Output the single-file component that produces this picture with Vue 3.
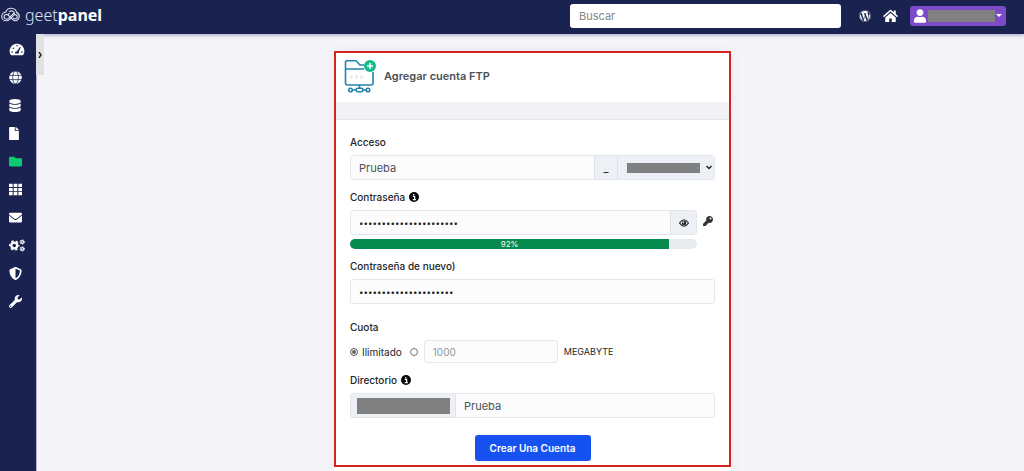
<script setup>
import { ref } from 'vue'

const icons = {
  dashboard: 'M288 32A288 288 0 0 0 40 466q8 14 24 14h448q16 0 24-14A288 288 0 0 0 288 32zM288 80a30 30 0 1 1 0 60 30 30 0 0 1 0-60zM96 384a32 32 0 1 1 0-64 32 32 0 0 1 0 64zm52-144a32 32 0 1 1 0-64 32 32 0 0 1 0 64zm247-73q10-15 25-8 15 7 8 24l-73 166q19 31-1 67H222q-27-51 18-82 17-11 45-14zm85 217a32 32 0 1 1 0-64 32 32 0 0 1 0 64z',
  database: 'M448 73.143v45.714C448 159.143 347.667 192 224 192S0 159.143 0 118.857V73.143C0 32.857 100.333 0 224 0s224 32.857 224 73.143zM448 176v102.857C448 319.143 347.667 352 224 352S0 319.143 0 278.857V176c48.125 33.143 136.208 48.572 224 48.572S399.874 209.143 448 176zm0 160v102.857C448 479.143 347.667 512 224 512S0 479.143 0 438.857V336c48.125 33.143 136.208 48.572 224 48.572S399.874 369.143 448 336z',
  file: 'M224 136V0H24C10.7 0 0 10.7 0 24v464c0 13.3 10.7 24 24 24h336c13.3 0 24-10.7 24-24V160H248c-13.2 0-24-10.8-24-24zm160-14.1v6.1H256V0h6.1c6.4 0 12.5 2.5 17 7l97.9 98c4.5 4.5 7 10.6 7 16.9z',
  folder: 'M464 128H272l-64-64H48C21.49 64 0 85.49 0 112v288c0 26.51 21.49 48 48 48h416c26.51 0 48-21.49 48-48V176c0-26.51-21.49-48-48-48z',
  grid: 'M0 32h144v130H0zM184 32h144v130H184zM368 32h144v130H368zM0 194h144v130H0zM184 194h144v130H184zM368 194h144v130H368zM0 356h144v124H0zM184 356h144v124H184zM368 356h144v124H368z',
  mail: 'M48 64h416q48 0 48 48v24L295 303q-39 28-78 0L0 136v-24q0-48 48-48zM0 178l198 152q58 40 116 0l198-152v222q0 48-48 48H48q-48 0-48-48z',
  shield: 'M466.5 83.7l-192-80a48.15 48.15 0 0 0-36.9 0l-192 80C27.7 91.1 16 108.6 16 128c0 198.5 114.5 335.7 221.5 380.3 11.8 4.9 25.1 4.9 36.9 0C360.1 472.6 496 349.3 496 128c0-19.4-11.7-36.9-29.5-44.3zM256.1 446.3l-.1-381 175.9 73.3c-3.3 151.4-82.1 261.1-175.8 307.7z',
  wrench: 'M507.73 109.1c-2.24-9.03-13.54-12.09-20.12-5.51l-74.36 74.36-67.88-11.31-11.31-67.88 74.36-74.36c6.62-6.62 3.43-17.9-5.66-20.16-47.38-11.74-99.55.91-136.58 37.93-39.64 39.64-50.55 97.1-34.05 147.2L18.74 402.76c-24.99 24.99-24.99 65.51 0 90.5 24.99 24.99 65.51 24.99 90.5 0l213.21-213.21c50.12 16.71 107.47 5.68 147.37-34.22 37.07-37.07 49.7-89.32 37.91-136.73zM64 472c-13.25 0-24-10.75-24-24 0-13.26 10.75-24 24-24s24 10.74 24 24c0 13.25-10.75 24-24 24z'
}

const nav = [
  { id: 'dashboard', label: 'Panel', box: '0 0 576 512', w: 16 },
  { id: 'globe', label: 'Dominios', box: '0 0 512 512', w: 13 },
  { id: 'database', label: 'Bases de datos', box: '0 0 448 512', w: 12 },
  { id: 'file', label: 'Archivos', box: '0 0 384 512', w: 10 },
  { id: 'folder', label: 'FTP', box: '0 0 512 512', w: 13, active: true },
  { id: 'grid', label: 'Aplicaciones', box: '0 0 512 512', w: 13 },
  { id: 'mail', label: 'Correo', box: '0 0 512 512', w: 13 },
  { id: 'gears', label: 'Ajustes', box: '0 0 640 512', w: 16 },
  { id: 'shield', label: 'Seguridad', box: '0 0 512 512', w: 13 },
  { id: 'wrench', label: 'Herramientas', box: '0 0 512 512', w: 13 }
]

const login = ref('Prueba')
const password = ref('x'.repeat(22))
const confirmation = ref('x'.repeat(21))
const directory = ref('Prueba')
const quota = ref('unlimited')
const strength = 92
</script>

<template>
  <div class="app">
    <header class="topbar">
      <a class="brand" href="#">
        <svg class="brand-mark" viewBox="0 0 42 32" fill="none" stroke="#d9dced" stroke-width="2.4">
          <path d="M11 28a9 9 0 0 1-1-18A12 12 0 0 1 33 11a9 9 0 0 1-2 17q-4 0-7-3l-9-9q-4-3-7 0-3 4 0 7 4 3 8 0l11-11" />
          <path d="M17 9q6-4 10 1 2 3 1 6M11 28q4 0 7-3l9-9q4-2 7 2 1 5-3 6-3 1-6-2M14 16l4-4" />
        </svg>
        <span class="brand-name">geet<b>panel</b></span>
      </a>
      <div class="tools">
        <input class="search" type="search" placeholder="Buscar" aria-label="Buscar" />
        <a class="tool" href="#" aria-label="WordPress">
          <svg width="12" height="12" viewBox="0 0 512 512"><path d="M61.7 169.4l101.5 278C92.2 413 43.3 340.2 43.3 256c0-30.9 6.6-60.1 18.4-86.6zm337.9 75.9c0-26.3-9.4-44.5-17.5-58.7-10.8-17.5-20.9-32.4-20.9-49.9 0-19.6 14.8-37.8 35.7-37.8.9 0 1.8.1 2.8.2-37.9-34.7-88.3-55.9-143.7-55.9-74.3 0-139.7 38.1-177.8 95.9 5 .2 9.7.3 13.7.3 22.2 0 56.7-2.7 56.7-2.7 11.5-.7 12.8 16.2 1.4 17.5 0 0-11.5 1.3-24.3 2l77.5 230.4L249.8 247l-33.1-90.8c-11.5-.7-22.3-2-22.3-2-11.5-.7-10.1-18.2 1.3-17.5 0 0 35.1 2.7 56 2.7 22.2 0 56.7-2.7 56.7-2.7 11.5-.7 12.8 16.2 1.4 17.5 0 0-11.5 1.3-24.3 2l76.9 228.7 21.2-70.9c9-29.4 16-50.5 16-68.7zm-139.9 29.3l-63.8 185.5c19.1 5.6 39.2 8.7 60.1 8.7 24.8 0 48.5-4.3 70.6-12.1-.6-.9-1.1-1.9-1.5-2.9l-65.4-179.2zm183-120.7c.9 6.8 1.4 14 1.4 21.9 0 21.6-4 45.8-16.2 76.2l-65 187.9C426.2 403 468.7 334.5 468.7 256c0-37-9.4-71.8-26-102.1zM504 256c0 136.8-111.3 248-248 248C119.2 504 8 392.7 8 256 8 119.2 119.2 8 256 8c136.7 0 248 111.2 248 248zm-11.4 0c0-130.5-106.2-236.6-236.6-236.6C125.5 19.4 19.4 125.5 19.4 256S125.6 492.6 256 492.6c130.5 0 236.6-106.1 236.6-236.6z" /></svg>
        </a>
        <a class="tool" href="#" aria-label="Inicio">
          <svg width="15" height="13" viewBox="0 0 30 26"><path d="M15 1L0 14l2 2.500L15 5l13 11.500L30 14l-4.500-4V3h-4v3.500z" /><path d="M15 8L4.500 17v9h8v-7h5v7h8v-9z" /></svg>
        </a>
        <button class="account" type="button" aria-label="Cuenta">
          <svg width="12" height="14" viewBox="0 0 448 512"><path d="M224 256c70.700 0 128-57.300 128-128S294.700 0 224 0 96 57.300 96 128s57.300 128 128 128zm89.600 32h-16.700c-22.200 10.200-46.900 16-72.900 16s-50.600-5.800-72.900-16h-16.700C60.200 288 0 348.200 0 422.400V464c0 26.500 21.500 48 48 48h352c26.500 0 48-21.500 48-48v-41.600c0-74.200-60.200-134.400-134.400-134.400z" /></svg>
          <span class="redacted account-name"></span>
          <span class="caret"></span>
        </button>
      </div>
    </header>

    <div class="body">
      <nav class="sidebar">
        <a v-for="item in nav" :key="item.id" href="#" :aria-label="item.label" :class="{ active: item.active }">
          <svg :width="item.w" height="13" :viewBox="item.box">
            <path v-if="icons[item.id]" fill-rule="evenodd" :d="icons[item.id]" />
            <g v-else-if="item.id === 'globe'">
              <circle cx="256" cy="256" r="248" />
              <g fill="none" stroke="#1a2350" stroke-width="30"><ellipse cx="256" cy="256" rx="112" ry="250" /><path d="M0 172h512M0 340h512" /></g>
            </g>
            <g v-else fill="none" stroke="#fff">
              <circle cx="210" cy="256" r="118" stroke-width="92" />
              <circle cx="210" cy="256" r="182" stroke-width="62" stroke-dasharray="86 104.600" stroke-dashoffset="43" />
              <circle cx="530" cy="118" r="56" stroke-width="50" /><circle cx="530" cy="118" r="92" stroke-width="32" stroke-dasharray="46 50.300" />
              <circle cx="530" cy="394" r="56" stroke-width="50" /><circle cx="530" cy="394" r="92" stroke-width="32" stroke-dasharray="46 50.300" />
            </g>
          </svg>
        </a>
        <button class="expand" type="button" aria-label="Expandir menú">
          <svg width="4" height="6" viewBox="0 0 4 6"><path d="M1 0l2 3-2 3" fill="none" stroke="#222" stroke-width="1.400" /></svg>
        </button>
      </nav>

      <main class="main">
        <div class="sheet">
          <form class="panel" @submit.prevent>
            <div class="panel-head">
              <svg width="32" height="34" viewBox="0 0 32 34" fill="none" stroke="#2482ae" stroke-width="1.600">
                <path d="M20 6h-4l-4-4.300H3Q1.500 1.700 1.500 3.500V24q0 2 2 2H27q2 0 2-2V13M1.500 10H20M15.500 26v4M8 31h4m6 0h4" />
                <circle cx="6.500" cy="31" r="1.800" /><circle cx="24" cy="31" r="1.800" /><rect x="12" y="29.300" width="7" height="3.400" rx="1.600" />
                <circle cx="26" cy="7" r="6" fill="#12bd8b" stroke="none" /><path d="M26 4v6m-3-3h6" stroke="#fff" />
                <path d="M6 18h3m2 0h3m2 0h3" stroke="#f0eeee" stroke-width="4" />
              </svg>
              <h1>Agregar cuenta FTP</h1>
            </div>
            <div class="divider"></div>

            <div class="fields">
              <div class="field">
                <label for="login">Acceso</label>
                <div class="group">
                  <input id="login" v-model="login" class="control" type="text" />
                  <span class="addon">_</span>
                  <div class="domain">
                    <span class="redacted domain-name"></span>
                    <select aria-label="Dominio"><option></option></select>
                    <svg width="6" height="5" viewBox="0 0 6 5"><path d="M.5 1L3 3.500 5.500 1" fill="none" stroke="#222" stroke-width="1.400" /></svg>
                  </div>
                </div>
              </div>

              <div class="field">
                <label for="password">Contraseña
                  <svg class="info" viewBox="0 0 16 16"><circle cx="8" cy="8" r="8" fill="#080808" /><path d="M6 7h3v5m-3 0h5M7.500 3v2.200" fill="none" stroke="#fff" stroke-width="2" /></svg>
                </label>
                <div class="password-row">
                  <div class="password-box">
                    <div class="group">
                      <input id="password" v-model="password" class="control secret" type="password" />
                      <button class="addon eye" type="button" aria-label="Mostrar contraseña">
                        <svg width="10" height="8" viewBox="0 0 20 16"><path d="M1 8q9-13 18 0-9 13-18 0z" fill="none" stroke="#222" stroke-width="2.400" /><circle cx="10" cy="8" r="4.500" fill="#222" /><circle cx="8.800" cy="6.800" r="1.600" fill="#fff" /></svg>
                      </button>
                    </div>
                    <div class="meter" role="progressbar" aria-valuemin="0" aria-valuemax="100" :aria-valuenow="strength" aria-label="Seguridad de la contraseña">
                      <div class="meter-fill" :style="{ width: strength + '%' }">{{ strength }}%</div>
                    </div>
                  </div>
                  <button class="generate" type="button" aria-label="Generar contraseña">
                    <svg width="10" height="10" viewBox="0 0 512 512"><path fill="#333" d="M512 176.001C512 273.203 433.202 352 336 352c-11.220 0-22.190-1.062-32.827-3.069l-24.012 27.014A23.999 23.999 0 0 1 261.223 384H224v40c0 13.255-10.745 24-24 24h-40v40c0 13.255-10.745 24-24 24H24c-13.255 0-24-10.745-24-24v-78.059c0-6.365 2.529-12.470 7.029-16.971l161.802-161.802C163.108 213.814 160 195.271 160 176 160 78.798 238.797.001 335.999 0 433.488-.001 512 78.511 512 176.001zM336 128c0 26.510 21.490 48 48 48s48-21.490 48-48-21.490-48-48-48-48 21.490-48 48z" /></svg>
                  </button>
                </div>
              </div>

              <div class="field">
                <label for="confirmation">Contraseña de nuevo)</label>
                <div class="group"><input id="confirmation" v-model="confirmation" class="control secret" type="password" /></div>
              </div>

              <fieldset class="field quota">
                <legend>Cuota</legend>
                <div class="quota-row">
                  <label><input v-model="quota" type="radio" name="quota" value="unlimited" />Ilimitado</label>
                  <input v-model="quota" type="radio" name="quota" value="limited" aria-label="Limitado" />
                  <input id="size" class="control size" type="text" placeholder="1000" />
                  <label for="size" class="unit">MEGABYTE</label>
                </div>
              </fieldset>

              <div class="field">
                <label for="directory">Directorio
                  <svg class="info" viewBox="0 0 16 16"><circle cx="8" cy="8" r="8" fill="#080808" /><path d="M6 7h3v5m-3 0h5M7.500 3v2.200" fill="none" stroke="#fff" stroke-width="2" /></svg>
                </label>
                <div class="group">
                  <span class="addon prefix"><span class="redacted prefix-name"></span></span>
                  <input id="directory" v-model="directory" class="control" type="text" />
                </div>
              </div>

              <button class="submit" type="submit">Crear Una Cuenta</button>
            </div>
          </form>
        </div>
      </main>
    </div>
  </div>
</template>

<style>
body { background: #f4f4f9; overflow: hidden; }
</style>

<style scoped>
.app { font-family: Inter, "Open Sans", sans-serif; font-size: 11px; color: #212529; min-height: 100vh; display: flex; flex-direction: column; }
.app *, .app *::before { box-sizing: border-box; }
input, select, button { font: inherit; color: inherit; margin: 0; }
button { cursor: pointer; padding: 0; border: 0; background: none; }
svg { flex: none; display: block; }
.redacted { background: #808080; flex: none; }

.topbar { height: 34px; background: #1a2350; box-shadow: 0 1px 4px #1a235066; display: flex; align-items: center; justify-content: space-between; padding-right: 18px; position: relative; }
.brand { display: flex; align-items: center; gap: 4px; color: #fff; text-decoration: none; padding: 0 0 4px 1px; }
.brand-mark { width: 20px; height: 16px; }
.brand-name { font-family: "Noto Sans", "Open Sans", sans-serif; font-size: 16px; line-height: 24px; font-weight: 300; color: #dfe2f0; }
.brand-name b { font-weight: 700; color: #fff; }
.tools { display: flex; align-items: center; padding-bottom: 3px; }
.search { width: 271px; height: 24px; border: 0; border-radius: 3px; background: #fff; padding: 0 9px; outline: 0; margin-right: 18px; }
.search::placeholder { color: #858585; opacity: 1; }
.tool { margin-right: 12px; }
.tool svg, .account svg { fill: #fff; }
.account { height: 20px; width: 96px; border-radius: 3px; background: #7d4bc8; display: flex; align-items: center; justify-content: space-between; padding: 0 4px; }
.account-name { width: 67px; height: 12px; }
.caret { border: 3px solid transparent; border-top-color: #fff; border-bottom: 0; }

.body { flex: 1; display: flex; align-items: flex-start; }
.sidebar { align-self: stretch; width: 37px; flex: none; background: #1a2350; border-right: 1px solid #aeb2cc; display: flex; flex-direction: column; gap: 4px; padding: 3px 0 0 9px; position: relative; }
.sidebar a { height: 24px; display: flex; align-items: center; fill: #fff; }
.sidebar a.active { fill: #0bcb72; }
.expand { position: absolute; top: 0; left: 100%; width: 8px; height: 41px; background: #e0e2e4; display: flex; align-items: center; justify-content: center; }

.main { flex: 1; display: flex; justify-content: center; padding: 17px 0 0 4px; }
.sheet { width: 397px; padding-bottom: 16px; background: #fff; box-shadow: 0 0 12px #1a23500d; }
.panel { border: 2px solid #d3231f; }
.panel-head { height: 49px; display: flex; align-items: center; gap: 8px; padding: 0 8px 3px; }
h1 { margin: 0; font-size: 11px; line-height: 16px; font-weight: 600; color: #4b5157; }
.divider { height: 18px; background: #f1f1f6; border-bottom: 1px solid #e3e4e9; }
.fields { display: flex; flex-direction: column; gap: 9px; padding: 14px 14px 4px; }
.field { display: flex; flex-direction: column; gap: 5px; }
.field > label, legend { font-size: 10px; line-height: 16px; height: 16px; font-weight: 500; padding: 0; display: flex; align-items: center; gap: 4px; }
.info { width: 10px; height: 10px; }
.group { display: flex; height: 25px; border: 1px solid #e3e6ea; border-radius: 3px; overflow: hidden; background: #fcfcfc; }
.control { flex: 1; min-width: 0; border: 0; outline: 0; padding: 0 8px; background: #fcfcfc; color: #495057; }
.secret { color: #222; font-size: 8px; }
.addon { display: flex; align-items: center; justify-content: center; width: 23px; background: #edf0f5; border-left: 1px solid #dde1e8; }
.domain { width: 97px; background: #edf0f5; border-left: 1px solid #dde1e8; display: flex; align-items: center; justify-content: space-between; padding: 0 2px 0 9px; position: relative; }
.domain-name { width: 73px; height: 10px; }
.domain select { position: absolute; inset: 0; width: 100%; height: 100%; appearance: none; border: 0; background: transparent; }
.password-row { display: flex; align-items: flex-start; gap: 6px; }
.password-box { flex: 1; display: flex; flex-direction: column; gap: 4px; }
.eye { width: 26px; }
.generate { height: 22px; width: 12px; display: flex; align-items: center; }
.meter { height: 10px; border-radius: 5px; overflow: hidden; background: #e9ecef; }
.meter-fill { height: 10px; background: #068a50; color: #fff; font-size: 8px; line-height: 10px; text-align: center; }
.quota { border: 0; margin: 6px 0 0; padding: 0; min-width: 0; display: block; }
.quota-row { display: flex; align-items: center; margin-top: 5px; height: 23px; font-size: 10px; }
.quota-row label { display: flex; align-items: center; gap: 4px; }
input[type="radio"] { appearance: none; width: 8px; height: 8px; border: 1px solid #767676; border-radius: 50%; background: #fff; }
input[type="radio"]:checked { background: #666; box-shadow: inset 0 0 0 1px #fff; }
.quota-row > input[type="radio"] { margin: 0 6px 0 8px; }
.size { flex: none; width: 134px; height: 23px; border: 1px solid #e3e6ea; border-radius: 3px; }
.size::placeholder { color: #8f9499; opacity: 1; font-size: 10px; }
.quota-row .unit { margin-left: 6px; font-size: 9px; }
.prefix { width: 105px; border-left: 0; border-right: 1px solid #dde1e8; }
.prefix-name { width: 93px; height: 16px; }
.submit { align-self: center; margin-top: 8px; width: 116px; height: 26px; border-radius: 3px; background: #1652f0; color: #fff; font-size: 10px; font-weight: 600; }
</style>
